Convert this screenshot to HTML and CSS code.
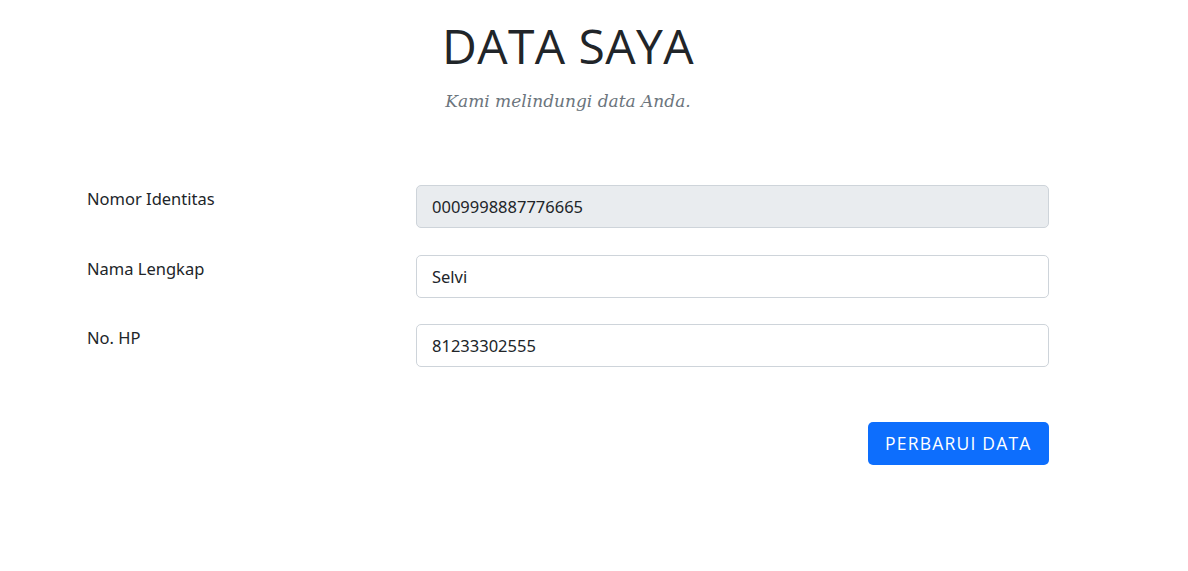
FILE: index.html
```html
<!DOCTYPE html>
<html lang="id">
<head>
<meta charset="utf-8">
<title>Data Saya</title>
<link rel="stylesheet" href="styles.css">
</head>
<body>
<header class="head">
  <h1 class="title">DATA SAYA</h1>
  <p class="subtitle">Kami melindungi data Anda.</p>
</header>
<form class="form">
  <div class="row">
    <label class="label" for="nid">Nomor Identitas</label>
    <input class="control disabled" id="nid" value="0009998887776665" disabled>
  </div>
  <div class="row">
    <label class="label" for="nama">Nama Lengkap</label>
    <input class="control" id="nama" value="Selvi">
  </div>
  <div class="row">
    <label class="label" for="hp">No. HP</label>
    <input class="control" id="hp" value="81233302555">
  </div>
  <div class="actions">
    <button type="button" class="btn">PERBARUI DATA</button>
  </div>
</form>
</body>
</html>
```
FILE: styles.css
```css
* { box-sizing: border-box; }
html, body { margin: 0; padding: 0; background: #fff; }
body {
  font-family: "Noto Sans", "Open Sans", sans-serif;
  color: #212529;
}
.head {
  display: flex;
  flex-direction: column;
  align-items: center;
  padding: 21px 52px 0 0;
}
.title {
  margin: 0;
  font-family: "Open Sans", sans-serif;
  font-weight: 400;
  font-size: 48px;
  line-height: 50px;
  letter-spacing: 0.4px;
  color: #212529;
}
.subtitle {
  margin: 20px 0 0 0;
  font-family: "DejaVu Serif", serif;
  font-style: italic;
  font-size: 17px;
  line-height: 20px;
  color: #6c757d;
}
.form {
  width: 962px;
  margin: 74px 0 0 87px;
  display: flex;
  flex-direction: column;
  gap: 26.5px;
}
.row {
  display: grid;
  grid-template-columns: 329px 1fr;
  align-items: start;
}
.label {
  font-size: 16.5px;
  line-height: 26px;
  padding-top: 1px;
}
.control {
  height: 43px;
  width: 100%;
  border: 1px solid #ced4da;
  border-radius: 5px;
  padding: 0 15px;
  font-family: "Noto Sans", "Open Sans", sans-serif;
  font-size: 16.5px;
  color: #212529;
  background: #fff;
}
.control.disabled { background: #e9ecef; opacity: 1; }
.actions {
  display: flex;
  justify-content: flex-end;
  margin-top: 28px;
}
.btn {
  height: 43px;
  padding: 0 17.5px;
  border: none;
  border-radius: 5px;
  background: #0d6efd;
  color: #fff;
  font-family: "Open Sans", sans-serif;
  font-size: 17.5px;
  letter-spacing: 1.2px;
}
```
